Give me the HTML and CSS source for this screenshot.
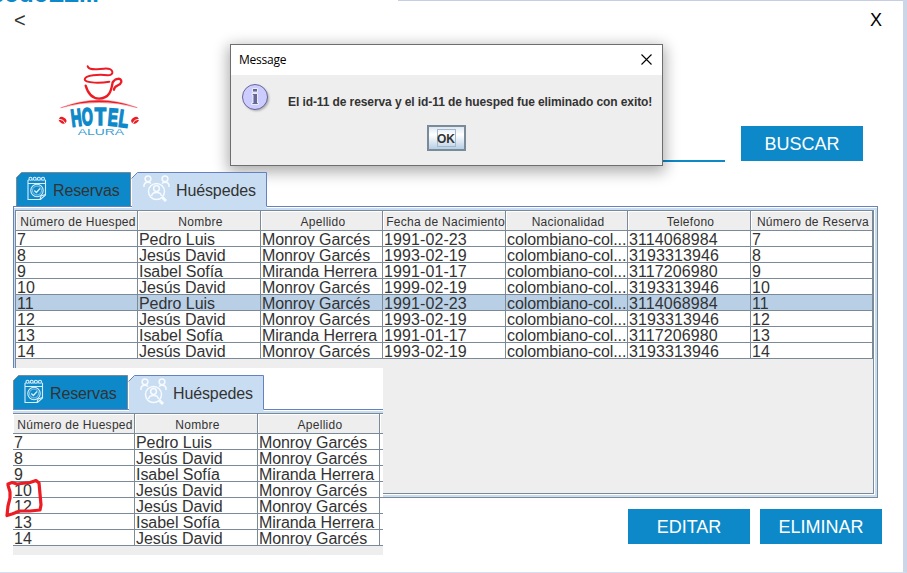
FILE: index.html
```html
<!DOCTYPE html>
<html lang="es">
<head>
<meta charset="utf-8">
<title>Hotel Alura</title>
<link rel="stylesheet" href="styles.css">
</head>
<body>
<svg width="0" height="0" class="defs">
  <defs>
    <g id="calendar" fill="none" stroke="#d9eefa" stroke-width="1.1">
      <path d="M1 4V23.5H13.5L18.5 19V4M1 7.5H18.5M1 4H2M5 4H6M9 4H10.5M13.5 4H14.5M17.5 4H18.5"/>
      <circle cx="3.5" cy="2.8" r="1.5"/><circle cx="7.7" cy="2.8" r="1.5"/><circle cx="11.9" cy="2.8" r="1.5"/><circle cx="16" cy="2.8" r="1.5"/>
      <circle cx="10" cy="14.5" r="6.2"/><circle cx="10" cy="14.5" r="4.5" stroke-width=".6"/>
      <path d="M7.3 14.5L9.4 16.5L13 12.5" stroke-width="1.3"/><path d="M13 23.5L14 20L18.5 18.5"/>
    </g>
    <g id="people" fill="none" stroke="#f7faff" stroke-width="1.5">
      <circle cx="5" cy="3.8" r="2.9"/><circle cx="22" cy="3.8" r="2.9"/>
      <path d="M1 12V10Q1.5 7.2 5 7.2Q7 7.2 8 8.5M26 12V10Q25.5 7.2 22 7.2Q20 7.2 19 8.5"/>
      <circle cx="13.5" cy="16.5" r="8"/><circle cx="13.5" cy="13.5" r="2.9"/>
      <path d="M8.7 21Q8.8 17.5 13.5 17.5Q18.2 17.5 18.3 21"/><path d="M19.5 22.5L23 26" stroke-width="3"/>
    </g>
  </defs>
</svg>
<main class="window">
  <div class="cut-title">codoEZ...</div>
  <div class="top-edge"></div>
  <header class="bar"><span class="back">&lt;</span><span class="close">X</span></header>
  <section class="hero">
    <svg class="logo" viewBox="150 180 285 270" fill="none" stroke="#ed1c24" stroke-linecap="round">
      <path d="M263 199C267 213 293 207 312 206C343 204 344 226 323 226C297 222 256 226 254 238C254 251 307 249 328 245" stroke-width="6"/>
      <path d="M257 257C263 278 273 295 297 296C332 294 334 267 338 247C345 234 365 232 364 246C361 258 342 256 342 269" stroke-width="7"/>
      <path d="M183 323Q297 278 412 323Q297 291 183 323Z" fill="#ed1c24" stroke-width="1"/>
      <g fill="#ed1c24" stroke="none"><ellipse cx="188" cy="361" rx="12" ry="9" transform="rotate(30 188 361)"/><ellipse cx="405" cy="361" rx="12" ry="9" transform="rotate(-30 405 361)"/></g>
      <path d="M177 358Q190 358 195 369M417 358Q403 358 399 369" stroke="#fff" stroke-width="3"/>
      <g fill="#0d89c9" stroke="#0d89c9" class="logo-name">
        <text transform="translate(216 380) rotate(-7) scale(.6 1)">H</text><text transform="translate(247 376) rotate(-3) scale(.58 1)">O</text><text transform="translate(284 375) scale(.76 1)">T</text><text transform="translate(322 376) rotate(5) scale(.62 1)">E</text><text transform="translate(353 379) rotate(8) scale(.66 1)">L</text>
      </g>
      <text class="logo-sub" x="233" y="404" textLength="139" lengthAdjust="spacingAndGlyphs" fill="#3ba0d4" stroke="none">ALURA</text>
    </svg>
    <div class="search"></div>
    <div class="button">BUSCAR</div>
  </section>

  <section class="pane">
    <div class="tabs">
      <div class="tab first"><svg class="shape" width="116" height="34"><path d="M1.5 34V5.5L6.5.5H115.5V34" fill="#0d89c9" stroke="#7a8a99"/></svg><svg class="icon" width="20" height="25"><use href="#calendar"/></svg><span>Reservas</span></div>
      <div class="tab second"><svg class="shape" width="136" height="38"><path d="M1 38V6L6 .5H135.5V38Z" fill="#c8ddf2"/><path d="M.5 6.5L6.5.5H135.5V34" fill="none" stroke="#6382bf"/></svg><svg class="icon" width="28" height="28"><use href="#people"/></svg><span>Huéspedes</span></div>
    </div>
    <div class="frame"><div class="scroll">
      <div class="row head"><b>Número de Huesped</b><b>Nombre</b><b>Apellido</b><b>Fecha de Nacimiento</b><b>Nacionalidad</b><b>Telefono</b><b>Número de Reserva</b></div>
      <div class="row"><i>7</i><i>Pedro Luis</i><i>Monroy Garcés</i><i>1991-02-23</i><i>colombiano-col...</i><i>3114068984</i><i>7</i></div>
      <div class="row"><i>8</i><i>Jesús David</i><i>Monroy Garcés</i><i>1993-02-19</i><i>colombiano-col...</i><i>3193313946</i><i>8</i></div>
      <div class="row"><i>9</i><i>Isabel Sofía</i><i>Miranda Herrera</i><i>1991-01-17</i><i>colombiano-col...</i><i>3117206980</i><i>9</i></div>
      <div class="row"><i>10</i><i>Jesús David</i><i>Monroy Garcés</i><i>1999-02-19</i><i>colombiano-col...</i><i>3193313946</i><i>10</i></div>
      <div class="row selected"><i>11</i><i>Pedro Luis</i><i>Monroy Garcés</i><i>1991-02-23</i><i>colombiano-col...</i><i>3114068984</i><i>11</i></div>
      <div class="row"><i>12</i><i>Jesús David</i><i>Monroy Garcés</i><i>1993-02-19</i><i>colombiano-col...</i><i>3193313946</i><i>12</i></div>
      <div class="row"><i>13</i><i>Isabel Sofía</i><i>Miranda Herrera</i><i>1991-01-17</i><i>colombiano-col...</i><i>3117206980</i><i>13</i></div>
      <div class="row"><i>14</i><i>Jesús David</i><i>Monroy Garcés</i><i>1993-02-19</i><i>colombiano-col...</i><i>3193313946</i><i>14</i></div>
    </div></div>
  </section>
  <footer class="actions"><div class="button">EDITAR</div><div class="button">ELIMINAR</div></footer>
</main>

<aside class="inset"><section class="pane">
    <div class="tabs">
      <div class="tab first"><svg class="shape" width="116" height="34"><path d="M1.5 34V5.5L6.5.5H115.5V34" fill="#0d89c9" stroke="#7a8a99"/></svg><svg class="icon" width="20" height="25"><use href="#calendar"/></svg><span>Reservas</span></div>
      <div class="tab second"><svg class="shape" width="136" height="38"><path d="M1 38V6L6 .5H135.5V38Z" fill="#c8ddf2"/><path d="M.5 6.5L6.5.5H135.5V34" fill="none" stroke="#6382bf"/></svg><svg class="icon" width="28" height="28"><use href="#people"/></svg><span>Huéspedes</span></div>
    </div>
    <div class="frame"><div class="scroll">
      <div class="row head"><b>Número de Huesped</b><b>Nombre</b><b>Apellido</b><b></b></div>
      <div class="row"><i>7</i><i>Pedro Luis</i><i>Monroy Garcés</i><i></i></div>
      <div class="row"><i>8</i><i>Jesús David</i><i>Monroy Garcés</i><i></i></div>
      <div class="row"><i>9</i><i>Isabel Sofía</i><i>Miranda Herrera</i><i></i></div>
      <div class="row"><i>10</i><i>Jesús David</i><i>Monroy Garcés</i><i></i></div>
      <div class="row"><i>12</i><i>Jesús David</i><i>Monroy Garcés</i><i></i></div>
      <div class="row"><i>13</i><i>Isabel Sofía</i><i>Miranda Herrera</i><i></i></div>
      <div class="row"><i>14</i><i>Jesús David</i><i>Monroy Garcés</i><i></i></div>
    </div></div>
</section></aside>
<svg class="mark" width="44" height="44" fill="none" stroke="#ed1c24" stroke-width="3.2" stroke-linecap="round" stroke-linejoin="round"><path d="M5 8L9 6.5L14 8L27 6.5L33 4.500L36 7L37 18L38 29L37 34L27 35L17 35L9 38L4 39.500L5 30L7 22L7 16L5 9"/></svg>

<div class="dialog">
  <div class="dialog-title"><span>Message</span><svg width="11" height="11" stroke="#000" stroke-width="1.1"><path d="M.5.5L10.500 10.500M10.500.5L.5 10.500"/></svg></div>
  <div class="dialog-body">
    <svg class="info" width="32" height="32"><defs><filter id="soft"><feGaussianBlur stdDeviation="1"/></filter></defs><circle cx="15.500" cy="15.500" r="12.500" fill="#aaa" filter="url(#soft)"/><circle cx="14" cy="14" r="12.500" fill="#ccccff" stroke="#666699"/><path d="M11.500 5.500H16.500V9H11.500ZM11 10.500H16.500V20H17.500V21.500H10.500V20H12V12H11Z" fill="#666699" stroke="#fff" stroke-width=".8"/></svg>
    <p>El id-11 de reserva y el id-11 de huesped fue eliminado con exito!</p>
    <div class="ok"><span>OK</span></div>
  </div>
</div>
</body>
</html>
```
FILE: styles.css
```css
* { box-sizing: border-box; }
body { margin: 0; width: 907px; height: 573px; overflow: hidden; position: relative; background: #fff; color: #333; font-family: "Liberation Sans", Arial, sans-serif; }
.defs { position: absolute; }
.window { width: 907px; height: 573px; display: flex; flex-direction: column; border-right: 4px solid #cbd6e9; border-bottom: 1px solid #d5dfef; }
.cut-title { position: absolute; left: -9px; top: -19px; height: 26px; line-height: 26px; overflow: hidden; color: #0d89c9; font-size: 24px; font-weight: bold; }
.top-edge { height: 1px; margin-left: 398px; background: #c5cee3; flex: none; }
.bar { height: 59px; flex: none; display: flex; justify-content: space-between; padding: 8px 21px 0 14px; font-size: 18px; line-height: 22px; }
.back { font-size: 20px; }
.close { color: #000; line-height: 23px; }
.hero { height: 112px; flex: none; display: flex; padding-left: 50px; }
.logo { width: 95px; height: 90px; flex: none; }
.logo-name { font: bold 73px "Liberation Sans", sans-serif; stroke-width: 5; }
.logo-sub { font: 25px "Liberation Sans", sans-serif; }
.search { margin-left: 380px; width: 200px; height: 102px; border-bottom: 2px solid #0d89c9; }
.button { width: 122px; height: 35px; background: #0d89c9; color: #fff; font-size: 18px; line-height: 36px; text-align: center; }
.hero .button { margin: 66px 0 0 16px; }
.pane { width: 865px; margin-left: 13px; flex: none; }
.tabs { height: 34px; display: flex; padding-left: 2px; }
.tab { position: relative; height: 34px; display: flex; font-size: 16px; line-height: 37px; letter-spacing: -.12px; }
.tab .shape { position: absolute; left: 0; top: 0; overflow: visible; }
.tab .icon, .tab span { position: relative; }
.first { width: 116px; }
.first .icon { margin: 4px 0 0 12px; }
.first span { margin-left: 6px; }
.second { width: 136px; z-index: 1; }
.second .icon { margin: 3px 0 0 12px; overflow: visible; }
.second span { margin-left: 5px; }
.frame { height: 292px; border: 1px solid #6382bf; border-right-color: #7a8a99; border-bottom-color: #7a8a99; padding: 3px 3px 3px 1px; background: linear-gradient(#fff, #fff) 0 0 / 100% 1px no-repeat, linear-gradient(#fff, #fff) 860px 3px / 1px 284px no-repeat, linear-gradient(#fff, #fff) 1px 287px / 860px 1px no-repeat, #c8ddf2; }
.scroll { width: 859px; height: 284px; border: 1px solid #7a8a99; background: #eee; overflow: hidden; }
.row { width: 857px; height: 16px; display: grid; grid-template-columns: 122px 123px 122px 123px 122px 123px 122px; background: #fff; }
.row i { height: 16px; padding-left: 1px; border-right: 1px solid #7a8a99; border-bottom: 1px solid #7a8a99; font-style: normal; font-size: 16px; line-height: 18px; overflow: hidden; white-space: nowrap; }
.row i:nth-child(2) { letter-spacing: -.05px; }
.row i:nth-child(3) { letter-spacing: -.1px; }
.row i:nth-child(4), .row i:nth-child(6) { letter-spacing: .1px; }
.row i:nth-child(5) { letter-spacing: -.1px; }
.row.selected { background: #b8cfe5; }
.head { height: 20px; }
.head b { height: 20px; padding-left: 3px; border-right: 1px solid #7a8a99; border-bottom: 1px solid #7a8a99; box-shadow: inset 1px 1px #fff; background: #eee; font-weight: normal; font-size: 12px; line-height: 22px; letter-spacing: .28px; text-align: center; white-space: nowrap; overflow: hidden; }
.actions { display: flex; gap: 10px; padding: 11px 0 0 628px; }
.inset { position: absolute; left: 13px; top: 368px; width: 370px; height: 187px; overflow: hidden; background: #fff; }
.inset .pane { margin: 7px 0 0 -3px; }
.mark { position: absolute; left: 3px; top: 476px; }
.dialog { position: absolute; left: 230px; top: 44px; width: 433px; height: 122px; border: 1px solid #6e6e6e; background: #eee; box-shadow: 0 4px 14px 2px rgba(0,0,0,.33); }
.dialog-title { height: 30px; background: #fff; display: flex; justify-content: space-between; padding: 9px 10px 0 8px; color: #000; font: 12px/12px "Open Sans", sans-serif; letter-spacing: -.25px; }
.dialog-body { display: grid; grid-template-columns: 47px 1fr; padding: 8px 0 0 10px; }
.dialog-body p { margin: 12px 0 0; font-size: 12px; font-weight: bold; line-height: 14px; letter-spacing: -.09px; white-space: nowrap; }
.ok { grid-column: 1 / 3; width: 39px; height: 26px; margin: 10px 0 0 186px; border: 2px solid #7a8a99; background: linear-gradient(#dde8f3, #fff 35%, #b8cfe5); padding: 2px 0 0 8px; }
.ok span { display: block; width: 19px; height: 18px; border: 1px solid #a3b8cc; font-size: 12px; line-height: 18px; font-weight: bold; text-indent: -1px; white-space: nowrap; }
.info { display: block; }
```
